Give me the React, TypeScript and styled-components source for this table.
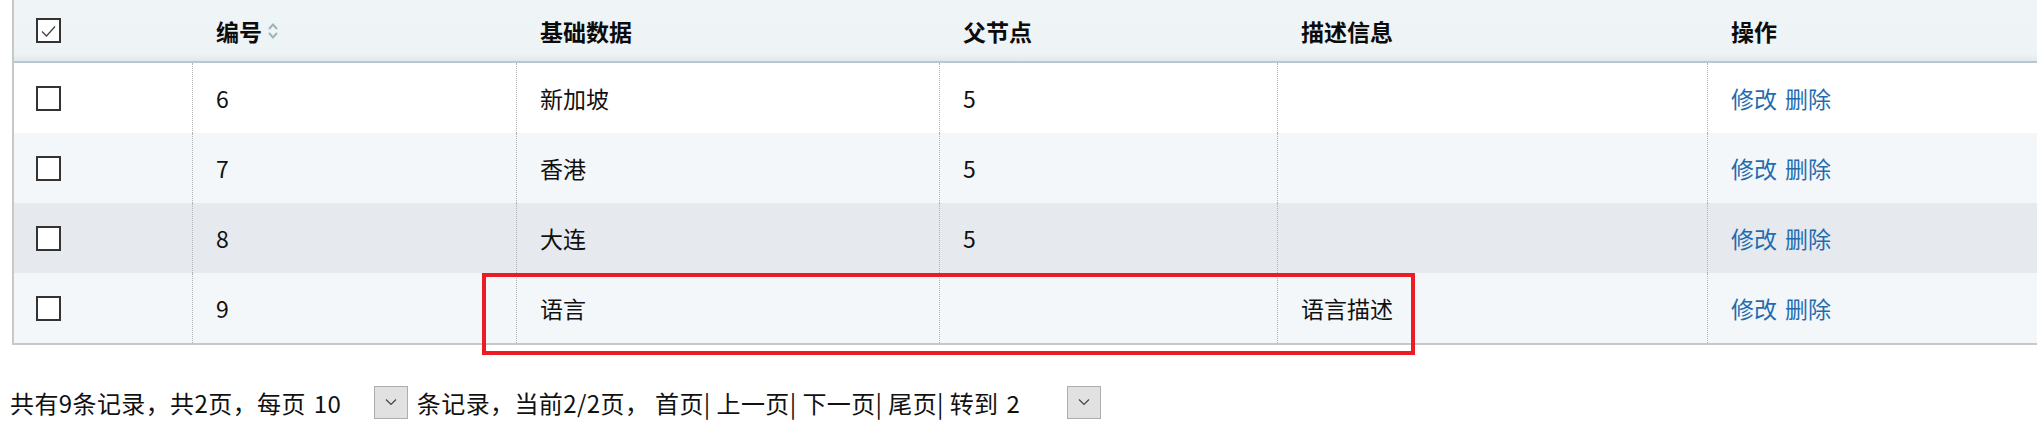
import React from "react";
import styled, { createGlobalStyle } from "styled-components";

const Global = createGlobalStyle`
  html, body { margin: 0; padding: 0; background: #ffffff; }
  body {
    font-family: "Noto Sans CJK SC", "Noto Sans", sans-serif;
    color: #111;
    overflow: hidden;
  }
`;

const Page = styled.div`
  position: relative;
  width: 2037px;
  height: 434px;
`;

const TableFrame = styled.div`
  margin-left: 12px;
  border-left: 2px solid #c8c8c8;
  border-bottom: 2px solid #c8c8c8;
`;

const cols = "178px 324px 423px 338px 430px 1fr";

const HeaderRow = styled.div`
  display: grid;
  grid-template-columns: ${cols};
  height: 61px;
  background: linear-gradient(to bottom, #eff4f7 0%, #eef3f6 88%, #e3e8eb 100%);
  border-bottom: 2px solid #b5c9d3;
`;

const HeadCell = styled.div<{ $first?: boolean }>`
  display: flex;
  align-items: center;
  gap: 5px;
  padding-left: ${(p) => (p.$first ? "22px" : "24px")};
  font-size: 23px;
  font-weight: 700;
  color: #0c0c0c;
`;

const BodyRow = styled.div<{ $bg: string }>`
  display: grid;
  grid-template-columns: ${cols};
  height: 70px;
  background: ${(p) => p.$bg};
`;

const Cell = styled.div<{ $first?: boolean }>`
  display: flex;
  align-items: center;
  padding-left: ${(p) => (p.$first ? "22px" : "23px")};
  border-left: ${(p) => (p.$first ? "none" : "1px dotted #b4b4b4")};
  font-size: 23px;
  color: #111;
`;

const Box = styled.span`
  display: inline-flex;
  align-items: center;
  justify-content: center;
  box-sizing: border-box;
  width: 25px;
  height: 25px;
  border: 2px solid #333;
  background: #fff;
`;

const Link = styled.a`
  color: #1f6db0;
  text-decoration: none;
  margin-right: 8px;
  cursor: pointer;
`;

const Footer = styled.div`
  margin: 41px 0 0 10px;
  display: flex;
  align-items: center;
  height: 32px;
  font-size: 24px;
  letter-spacing: 0.4px;
  color: #111;
  white-space: pre;
`;

const SelectWrap = styled.span`
  display: inline-flex;
  align-items: center;
  justify-content: space-between;
  width: 94px;
  height: 32px;
  margin: 0 9px 0 8px;
`;

const SelectText = styled.span`
  padding-left: 0;
`;

const ArrowBtn = styled.span`
  display: inline-flex;
  align-items: center;
  justify-content: center;
  box-sizing: border-box;
  width: 34px;
  height: 33px;
  background: #e1e1e1;
  border: 1px solid #adadad;
`;

const Highlight = styled.div`
  position: absolute;
  left: 482px;
  top: 273px;
  width: 933px;
  height: 82px;
  box-sizing: border-box;
  border: 4px solid #ec1c24;
  pointer-events: none;
`;

const SortIcon = () => (
  <svg width="12" height="20" viewBox="0 0 12 20" fill="none">
    <path d="M2 8 L6 3.5 L10 8" stroke="#9fb3bd" strokeWidth="2" />
    <path d="M2 12 L6 16.5 L10 12" stroke="#9fb3bd" strokeWidth="2" />
  </svg>
);

const Check = () => (
  <svg width="17" height="14" viewBox="0 0 17 14" fill="none">
    <path d="M2 7.5 L6.5 12 L15 2.5" stroke="#444" strokeWidth="1.3" />
  </svg>
);

const Chevron = () => (
  <svg width="12" height="8" viewBox="0 0 12 8" fill="none">
    <path d="M1 1.5 L6 6.5 L11 1.5" stroke="#444" strokeWidth="1.2" />
  </svg>
);

const Select = ({ value }: { value: string }) => (
  <SelectWrap>
    <SelectText>{value}</SelectText>
    <ArrowBtn>
      <Chevron />
    </ArrowBtn>
  </SelectWrap>
);

const rows = [
  { id: "6", name: "新加坡", parent: "5", desc: "", bg: "#ffffff" },
  { id: "7", name: "香港", parent: "5", desc: "", bg: "#f3f7fa" },
  { id: "8", name: "大连", parent: "5", desc: "", bg: "#e6eaee" },
  { id: "9", name: "语言", parent: "", desc: "语言描述", bg: "#f3f7fa" },
];

export default function App() {
  return (
    <Page>
      <Global />
      <TableFrame>
        <HeaderRow>
          <HeadCell $first>
            <Box>
              <Check />
            </Box>
          </HeadCell>
          <HeadCell>
            编号
            <SortIcon />
          </HeadCell>
          <HeadCell>基础数据</HeadCell>
          <HeadCell>父节点</HeadCell>
          <HeadCell>描述信息</HeadCell>
          <HeadCell>操作</HeadCell>
        </HeaderRow>
        {rows.map((r) => (
          <BodyRow key={r.id} $bg={r.bg}>
            <Cell $first>
              <Box />
            </Cell>
            <Cell>{r.id}</Cell>
            <Cell>{r.name}</Cell>
            <Cell>{r.parent}</Cell>
            <Cell>{r.desc}</Cell>
            <Cell>
              <Link>修改</Link>
              <Link>删除</Link>
            </Cell>
          </BodyRow>
        ))}
      </TableFrame>
      <Footer>
        共有9条记录，共2页，每页
        <Select value="10" />
        条记录，当前2/2页， 首页| 上一页| 下一页| 尾页| 转到
        <Select value="2" />
      </Footer>
      <Highlight />
    </Page>
  );
}
